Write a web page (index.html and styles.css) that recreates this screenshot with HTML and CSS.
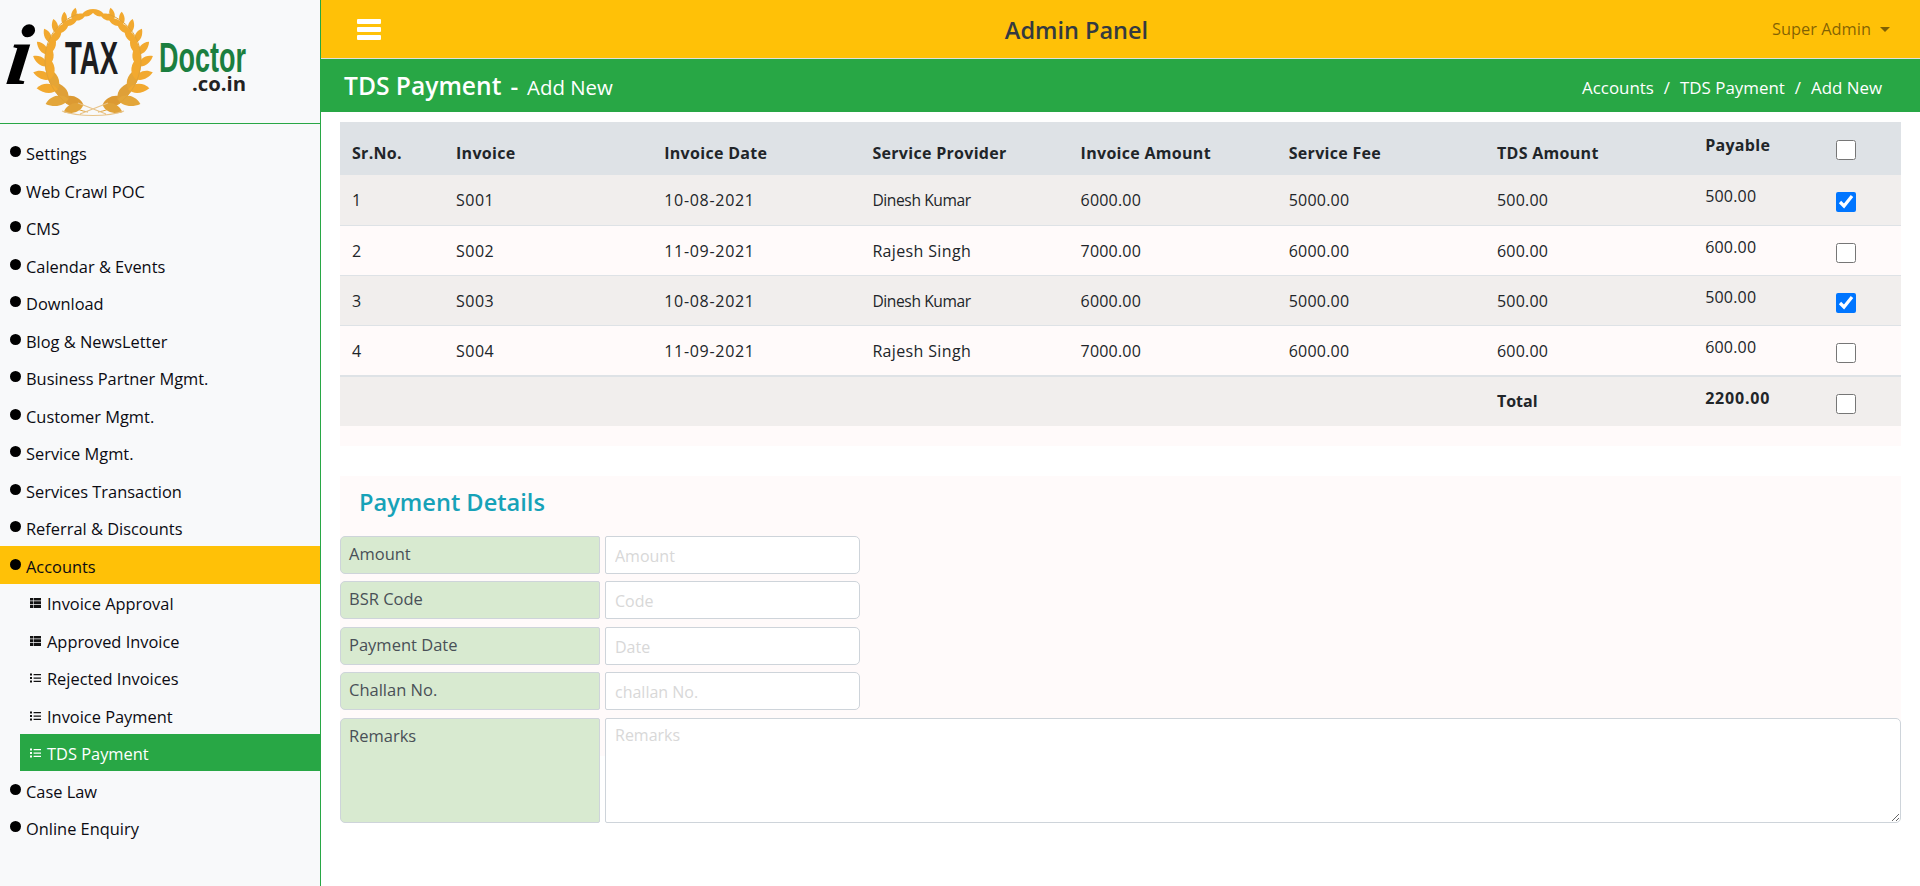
FILE: index.html
```html
<!DOCTYPE html>
<html lang="en">
<head>
<meta charset="utf-8">
<title>TDS Payment - Add New</title>
<link rel="stylesheet" href="styles.css">
</head>
<body>
<svg class="defs" width="0" height="0" aria-hidden="true">
  <symbol id="i-thlist" viewBox="0 0 11 10"><path d="M0 0h3v2.6H0zM3.6 0H11v2.6H3.6zM0 3.3h3v2.8H0zM3.6 3.3H11v2.8H3.6zM0 6.8h3V10H0zM3.6 6.8H11V10H3.6z"/></symbol>
  <symbol id="i-listul" viewBox="0 0 11 10"><path d="M0 .6h2v2H0zM0 4h2v2H0zM0 7.4h2v2H0zM3.6 1h7.4v1.3H3.6zM3.6 4.4h7.4v1.3H3.6zM3.6 7.8h7.4v1.3H3.6z"/></symbol>
</svg>
<div class="app">
  <aside class="sidebar">
    <div class="logo">
      <svg class="logo-svg" viewBox="0 0 320 123" width="320" height="123" role="img" aria-label="iTAX Doctor .co.in">
        <defs>
          <path id="lf" d="M0 0C4-7 14-9 23-5 18 4 7 6 0 0z"/>
          <g id="branch" fill="#f2a92f">
            <use href="#lf" transform="rotate(12 93 60) translate(93 106) rotate(196)" fill="#dc9a33"/>
            <use href="#lf" transform="rotate(12 93 60) translate(93 106) rotate(160) scale(.9)" fill="#e0a238"/>
            <use href="#lf" transform="rotate(32 93 60) translate(93 106) rotate(204)" fill="#dfa038"/>
            <use href="#lf" transform="rotate(32 93 60) translate(93 106) rotate(148)" fill="#e3a63a"/>
            <use href="#lf" transform="rotate(50 93 60) translate(93 106) rotate(206)" fill="#e5a536"/>
            <use href="#lf" transform="rotate(50 93 60) translate(93 106) rotate(146) scale(.9)"/>
            <use href="#lf" transform="rotate(66 93 60) translate(93 106) rotate(208) scale(.9)"/>
            <use href="#lf" transform="rotate(66 93 60) translate(93 106) rotate(146) scale(.8)"/>
            <use href="#lf" transform="rotate(82 93 60) translate(93 106) rotate(208) scale(.85)"/>
            <use href="#lf" transform="rotate(82 93 60) translate(93 106) rotate(146) scale(.75)"/>
            <use href="#lf" transform="rotate(97 93 60) translate(93 106) rotate(208) scale(.8)"/>
            <use href="#lf" transform="rotate(97 93 60) translate(93 106) rotate(146) scale(.7)"/>
            <use href="#lf" transform="rotate(112 93 60) translate(93 106) rotate(208) scale(.75)"/>
            <use href="#lf" transform="rotate(112 93 60) translate(93 106) rotate(146) scale(.65)"/>
            <use href="#lf" transform="rotate(126 93 60) translate(93 106) rotate(208) scale(.7)"/>
            <use href="#lf" transform="rotate(126 93 60) translate(93 106) rotate(146) scale(.6)"/>
            <use href="#lf" transform="rotate(140 93 60) translate(93 106) rotate(208) scale(.65)"/>
            <use href="#lf" transform="rotate(140 93 60) translate(93 106) rotate(146) scale(.55)"/>
            <use href="#lf" transform="rotate(153 93 60) translate(93 106) rotate(200) scale(.62)"/>
            <use href="#lf" transform="rotate(153 93 60) translate(93 106) rotate(146) scale(.5)"/>
            <use href="#lf" transform="rotate(166 93 60) translate(93 106) rotate(182) scale(.6)"/>
            <path d="M88 112C62 108 45 84 45 60 45 40 56 22 78 14" fill="none" stroke="#e0a238" stroke-width="1"/>
          </g>
        </defs>
        <use href="#branch"/>
        <use href="#branch" transform="translate(186 0) scale(-1 1)"/>
        <path d="M62 111C78 117 108 117 124 111M78 103L106 114M108 103L80 114" fill="none" stroke="#e8c48a" stroke-width="1.2"/>
        <text class="lg-i" transform="translate(4 84) skewX(-7)" x="0" y="0" textLength="25" lengthAdjust="spacingAndGlyphs">i</text>
        <text class="lg-tax" x="65" y="74" textLength="53" lengthAdjust="spacingAndGlyphs">TAX</text>
        <text class="lg-doc" x="159" y="72" textLength="87" lengthAdjust="spacingAndGlyphs">Doctor</text>
        <text class="lg-co" x="192" y="91" textLength="54" lengthAdjust="spacingAndGlyphs">.co.in</text>
      </svg>
    </div>
    <ul class="menu">
      <li class="item"><span class="dot"></span>Settings</li>
      <li class="item"><span class="dot"></span>Web Crawl POC</li>
      <li class="item"><span class="dot"></span>CMS</li>
      <li class="item"><span class="dot"></span>Calendar &amp; Events</li>
      <li class="item"><span class="dot"></span>Download</li>
      <li class="item"><span class="dot"></span>Blog &amp; NewsLetter</li>
      <li class="item"><span class="dot"></span>Business Partner Mgmt.</li>
      <li class="item"><span class="dot"></span>Customer Mgmt.</li>
      <li class="item"><span class="dot"></span>Service Mgmt.</li>
      <li class="item"><span class="dot"></span>Services Transaction</li>
      <li class="item"><span class="dot"></span>Referral &amp; Discounts</li>
      <li class="item item-open"><span class="dot"></span>Accounts</li>
      <li class="sub"><svg class="ico"><use href="#i-thlist"/></svg>Invoice Approval</li>
      <li class="sub"><svg class="ico"><use href="#i-thlist"/></svg>Approved Invoice</li>
      <li class="sub"><svg class="ico"><use href="#i-listul"/></svg>Rejected Invoices</li>
      <li class="sub"><svg class="ico"><use href="#i-listul"/></svg>Invoice Payment</li>
      <li class="sub sub-active"><svg class="ico"><use href="#i-listul"/></svg>TDS Payment</li>
      <li class="item"><span class="dot"></span>Case Law</li>
      <li class="item"><span class="dot"></span>Online Enquiry</li>
    </ul>
  </aside>
  <main class="main">
    <header class="topbar">
      <svg class="burger" viewBox="0 0 24 21" width="24" height="21" aria-label="Menu"><path d="M1 0h22a1 1 0 0 1 1 1v3a1 1 0 0 1-1 1H1a1 1 0 0 1-1-1V1a1 1 0 0 1 1-1zM1 8h22a1 1 0 0 1 1 1v3a1 1 0 0 1-1 1H1a1 1 0 0 1-1-1V9a1 1 0 0 1 1-1zM1 16h22a1 1 0 0 1 1 1v3a1 1 0 0 1-1 1H1a1 1 0 0 1-1-1v-3a1 1 0 0 1 1-1z"/></svg>
      <div class="panel-title">Admin Panel</div>
      <div class="user">Super Admin<span class="caret"></span></div>
    </header>
    <div class="pagebar">
      <div class="page-title"><span class="pt-main">TDS Payment</span> <span class="pt-dash">-</span> <span class="pt-sub">Add New</span></div>
      <nav class="crumbs"><span>Accounts</span><span class="sep">/</span><span>TDS Payment</span><span class="sep">/</span><span>Add New</span></nav>
    </div>
    <div class="content">
      <section class="table-wrap">
        <table class="tds">
          <colgroup>
            <col class="c-sr"><col class="c-w"><col class="c-w"><col class="c-w"><col class="c-w"><col class="c-w"><col class="c-w"><col class="c-pay"><col>
          </colgroup>
          <thead>
            <tr><th>Sr.No.</th><th>Invoice</th><th>Invoice Date</th><th>Service Provider</th><th>Invoice Amount</th><th>Service Fee</th><th>TDS Amount</th><th class="pay-h">Payable</th><th class="chk-cell"><input type="checkbox"></th></tr>
          </thead>
          <tbody>
            <tr><td>1</td><td class="code">S001</td><td class="date">10-08-2021</td><td class="nm-d">Dinesh Kumar</td><td class="amt">6000.00</td><td class="amt">5000.00</td><td class="amt">500.00</td><td class="pay amt">500.00</td><td class="chk-cell"><input type="checkbox" checked></td></tr>
            <tr><td>2</td><td class="code">S002</td><td class="date">11-09-2021</td><td class="nm-r">Rajesh Singh</td><td class="amt">7000.00</td><td class="amt">6000.00</td><td class="amt">600.00</td><td class="pay amt">600.00</td><td class="chk-cell"><input type="checkbox"></td></tr>
            <tr><td>3</td><td class="code">S003</td><td class="date">10-08-2021</td><td class="nm-d">Dinesh Kumar</td><td class="amt">6000.00</td><td class="amt">5000.00</td><td class="amt">500.00</td><td class="pay amt">500.00</td><td class="chk-cell"><input type="checkbox" checked></td></tr>
            <tr><td>4</td><td class="code">S004</td><td class="date">11-09-2021</td><td class="nm-r">Rajesh Singh</td><td class="amt">7000.00</td><td class="amt">6000.00</td><td class="amt">600.00</td><td class="pay amt">600.00</td><td class="chk-cell"><input type="checkbox"></td></tr>
            <tr class="total"><td colspan="6"></td><th class="tot-l">Total</th><th class="pay tot-v">2200.00</th><td class="chk-cell"><input type="checkbox"></td></tr>
          </tbody>
        </table>
      </section>
      <section class="payment">
        <h2 class="pay-title">Payment Details</h2>
        <div class="form">
          <label class="lbl">Amount</label><div class="fld"><input class="inp" placeholder="Amount"></div>
          <label class="lbl">BSR Code</label><div class="fld"><input class="inp" placeholder="Code"></div>
          <label class="lbl">Payment Date</label><div class="fld"><input class="inp" placeholder="Date"></div>
          <label class="lbl">Challan No.</label><div class="fld"><input class="inp" placeholder="challan No."></div>
          <label class="lbl lbl-tall">Remarks</label><textarea class="inp area" placeholder="Remarks"></textarea>
        </div>
      </section>
    </div>
  </main>
</div>
</body>
</html>
```

FILE: styles.css
```css
* { box-sizing: border-box; }
html, body { margin: 0; padding: 0; height: 100%; }
body { font-family: "Open Sans", "Noto Sans", sans-serif; font-size: 16px; line-height: 24px; color: #212529; background: #fff; overflow: hidden; }
.defs { position: absolute; }
.app { display: flex; height: 886px; }

.sidebar { width: 321px; flex: none; background: #f8f9fa; border-right: 1px solid #28a745; }
.logo { height: 124px; border-bottom: 1px solid #28a745; }
.logo-svg { display: block; }
.lg-i { font: italic 700 86px "Liberation Serif", serif; fill: #000; }
.lg-tax { font: 700 46px "Liberation Sans", sans-serif; fill: #1d1d1f; }
.lg-doc { font: 700 42px "Liberation Sans", sans-serif; fill: #1b7f3f; }
.lg-co { font: 700 20px "Open Sans", sans-serif; fill: #222; }

.menu { list-style: none; margin: 0; padding: 9.5px 0 0; font-size: 16.4px; }
.item, .sub { display: flex; align-items: center; height: 37.5px; padding-top: 4px; white-space: nowrap; color: #0b0b12; }
.item { padding-left: 10px; }
.dot { width: 11px; height: 11px; border-radius: 50%; background: #000; margin: -5px 5px 0 0; flex: none; }
.item-open { background: #ffc107; }
.sub { margin-left: 20px; padding-left: 10px; }
.ico { width: 11px; height: 10px; margin: -2px 6px 0 0; fill: #111; flex: none; }
.sub-active { background: #28a745; color: #fff; }
.sub-active .ico { fill: #fff; }

.main { flex: 1; min-width: 0; }
.topbar { height: 59px; background: #ffc107; border-bottom: 1px solid #dde0e0; display: flex; align-items: center; justify-content: space-between; padding: 0 30px 0 36px; }
.burger { fill: #fff; display: block; }
.panel-title { font-size: 23.5px; font-weight: 600; line-height: 30px; color: #343a40; padding-top: 1px; }
.user { color: rgba(0, 0, 0, .5); display: flex; align-items: center; font-size: 16.4px; }
.caret { width: 0; height: 0; margin-left: 9px; border: 5.5px solid transparent; border-top-color: rgba(0, 0, 0, .5); border-bottom: 0; }

.pagebar { height: 53px; background: #28a745; color: #fff; display: flex; align-items: center; justify-content: space-between; padding: 0 38px 0 23px; }
.page-title { display: flex; align-items: baseline; gap: 9px; }
.pt-main { font-size: 24.6px; font-weight: 600; line-height: 30px; }
.pt-dash { font-size: 24px; font-weight: 600; }
.pt-sub { font-size: 20.4px; }
.crumbs { display: flex; gap: 10px; padding-top: 5px; font-size: 16.9px; }

.content { padding: 10px 19px 0; }
.table-wrap { background: #fffafa; padding-bottom: 20px; }
.tds { width: 100%; border-collapse: collapse; table-layout: fixed; }
.c-sr { width: 104px; }
.c-w { width: 208.2px; }
.c-pay { width: 104px; }
.tds th, .tds td { padding: 12px; text-align: left; vertical-align: top; line-height: 24px; }
.tds thead th { background: #dee2e6; height: 53px; vertical-align: bottom; font-weight: 700; padding-bottom: 10px; letter-spacing: .3px; }
.tds thead .pay-h { vertical-align: top; padding-top: 11px; }
.tds tbody td, .tds tbody th { border-bottom: 1px solid #dee2e6; height: 50px; padding-top: 13px; }
.tds tbody tr:nth-child(odd) { background: #f1eeed; }
.tds .pay { padding-top: 9px; }
.tds .code { letter-spacing: .5px; }
.tds .date { letter-spacing: .7px; }
.tds .amt { letter-spacing: .2px; }
.tds .nm-d { font-size: 15.6px; letter-spacing: -.4px; }
.tds .nm-r { letter-spacing: .35px; }
.tds .total td, .tds .total th { border-bottom: 0; border-top: 2px solid #dee2e6; }
.tds .total .tot-l { padding-top: 12px; }
.tds .total .tot-v { letter-spacing: .8px; }
.tds .chk-cell { padding: 17px 0 0 39px; }
.tds thead .chk-cell { vertical-align: top; padding: 18px 0 0 39px; }
.tds input { display: block; width: 20px; height: 20px; margin: 0; }

.payment { background: #fffafa; margin-top: 30px; }
.pay-title { margin: 0; height: 60px; padding: 8px 0 0 19px; font-size: 23.6px; font-weight: 600; line-height: 36px; color: #17a2b8; }
.form { display: grid; grid-template-columns: 260px 1fr; column-gap: 5px; row-gap: 7.5px; grid-auto-rows: 38px; }
.lbl { background: #d8ead0; border: 1px solid #ced4da; border-radius: 5px 2px 2px 5px; padding: 2px 8px 0; color: #495057; line-height: 30px; font-size: 16.5px; }
.lbl-tall { height: 105px; }
.fld { display: block; }
.inp { display: block; width: 255px; height: 38px; border: 1px solid #ced4da; border-radius: 2px 5px 5px 2px; background: #fff; padding: 2px 9px 0; font: inherit; color: #495057; outline: 0; }
.inp::placeholder { color: #d8d8d8; opacity: 1; }
.area { width: 100%; height: 105px; padding-top: 4px; line-height: 24px; }
```
